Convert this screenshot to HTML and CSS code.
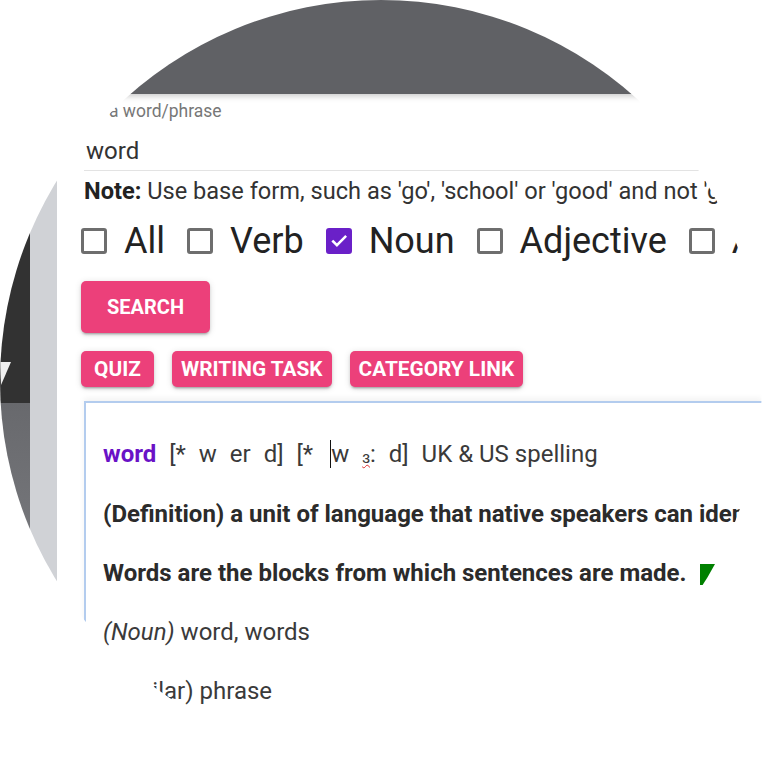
FILE: index.html
```html
<!DOCTYPE html>
<html lang="en">
<head>
<meta charset="utf-8">
<title>Dictionary search</title>
<link rel="stylesheet" href="styles.css">
</head>
<body>
<div class="lens">
  <header class="topbar"></header>
  <div class="layout">
    <aside class="rail">
      <div class="rail-top">
        <svg class="rail-arrow" width="12" height="26" viewBox="0 0 12 26"><polygon points="0,2 11,2 1,25" fill="#f0f0f0"/></svg>
      </div>
      <div class="rail-bottom"></div>
    </aside>
    <div class="gutter"></div>
    <main class="panel">
      <div class="field">
        <label class="field-label" for="q">Enter a word/phrase</label>
        <div class="field-input" id="q">word</div>
      </div>
      <p class="note"><b>Note:</b> Use base form, such as 'go', 'school' or 'good' and not 'going', 'schools' or 'better'.</p>
      <div class="options">
        <label class="opt"><span class="box"></span>All</label>
        <label class="opt"><span class="box"></span>Verb</label>
        <label class="opt"><span class="box checked"><svg width="22" height="22" viewBox="0 0 24 24"><path d="M5 12.5l4.5 4.5L19.5 7" fill="none" stroke="#fff" stroke-width="3" stroke-linecap="square"/></svg></span>Noun</label>
        <label class="opt"><span class="box"></span>Adjective</label>
        <label class="opt"><span class="box"></span>Adverb</label>
      </div>
      <button class="btn btn-lg">Search</button>
      <div class="actions">
        <button class="btn btn-sm btn-quiz">Quiz</button>
        <button class="btn btn-sm">Writing task</button>
        <button class="btn btn-sm">Category link</button>
      </div>
      <div class="entry">
        <p class="pron"><span class="headword">word</span><span class="ipa"> [* w er d] [* <span class="caret"></span>w <span class="spell">ɜ</span>: d] </span>UK &amp; US spelling</p>
        <p class="strong">(Definition) a unit of language that native speakers can identify as a single item of meaning.</p>
        <p class="strong">Words are the blocks from which sentences are made.<svg class="flag" width="16" height="21" viewBox="0 0 16 21"><polygon points="0,0 16,0 4,21 0,21" fill="#008000"/></svg></p>
        <p><i>(Noun)</i> word, words</p>
        <p>(Similar) phrase</p>
      </div>
    </main>
  </div>
</div>
</body>
</html>
```
FILE: styles.css
```css
* { box-sizing: border-box; }
html, body { margin: 0; padding: 0; background: #fff; }
body {
  width: 762px;
  height: 762px;
  overflow: hidden;
  font-family: Roboto, "Liberation Sans", sans-serif;
  color: #333;
}
.lens {
  width: 762px;
  height: 762px;
  border-radius: 50%;
  overflow: hidden;
  display: flex;
  flex-direction: column;
  background: #fff;
}
.topbar {
  height: 94px;
  flex: none;
  background: #606165;
  box-shadow: 0 2px 6px rgba(0, 0, 0, 0.22);
  position: relative;
  z-index: 2;
}
.layout {
  flex: 1;
  display: flex;
  min-height: 0;
}
.rail {
  width: 30px;
  flex: none;
  display: flex;
  flex-direction: column;
}
.rail-top {
  height: 309px;
  flex: none;
  background: #323232;
  padding-top: 266px;
}
.rail-arrow { display: block; }
.rail-bottom {
  flex: 1;
  background: linear-gradient(#68696d, #8b8c90);
}
.gutter {
  width: 27px;
  flex: none;
  background: #d0d2d6;
}
.panel {
  flex: 1;
  min-width: 0;
  background: #fff;
  padding: 0 0 0 24px;
  overflow: hidden;
}
.field {
  position: relative;
  width: 616px;
  margin-left: 3px;
  padding-top: 43px;
  border-bottom: 1px solid #e3e3e3;
}
.field-label {
  position: absolute;
  left: -20px;
  top: 7px;
  font-size: 17.5px;
  line-height: 20px;
  color: #777;
  white-space: nowrap;
}
.field-input {
  font-size: 24px;
  line-height: 28px;
  padding: 0 0 5px 2px;
  color: #333;
}
.note {
  margin: 6px 0 0;
  padding-left: 3px;
  font-size: 23.6px;
  line-height: 28px;
  white-space: nowrap;
  color: #333;
}
.note b { color: #222; }
.options {
  margin-top: 16px;
  height: 40px;
  display: flex;
  align-items: center;
  gap: 22px;
  white-space: nowrap;
}
.opt {
  display: flex;
  align-items: center;
  gap: 17px;
  font-size: 36px;
  line-height: 40px;
  color: #222;
  flex: none;
}
.opt .box { margin-top: -1px; }
.box {
  width: 26px;
  height: 26px;
  border: 3px solid #6e6e6e;
  border-radius: 3px;
  flex: none;
  display: flex;
  align-items: center;
  justify-content: center;
}
.box.checked {
  background: #6a20c8;
  border-color: #6a20c8;
}
.btn {
  display: flex;
  align-items: center;
  justify-content: center;
  border: 0;
  background: #ec407a;
  color: #fff;
  font-family: Roboto, "Liberation Sans", sans-serif;
  font-weight: 700;
  text-transform: uppercase;
  border-radius: 5px;
  box-shadow: 0 3px 2px -2px rgba(0,0,0,0.2), 0 2px 3px 0 rgba(0,0,0,0.14), 0 1px 7px 0 rgba(0,0,0,0.12);
  white-space: nowrap;
  cursor: pointer;
}
.btn-lg {
  margin-top: 20px;
  height: 52px;
  width: 129px;
  padding: 0;
  font-size: 20px;
}
.actions {
  margin-top: 18px;
  display: flex;
  gap: 18px;
}
.btn-sm {
  height: 36px;
  padding: 0 9px;
  font-size: 20.8px;
}
.btn-quiz { min-width: 73px; }
.entry {
  margin: 14px 0 0 3px;
  border: 2px solid #b3ccee;
  border-right: 0;
  border-bottom: 0;
  padding: 33px 0 0 17px;
  box-shadow: 0 -3px 6px rgba(0, 0, 0, 0.05);
  height: 400px;
}
.entry p {
  margin: 0 0 23px;
  font-size: 24px;
  line-height: 36px;
  white-space: nowrap;
  color: #3a3a3a;
}
.entry p.pron { margin-bottom: 21px; }
.entry p.strong {
  font-weight: 700;
  color: #2b2b2b;
}
.headword {
  font-weight: 700;
  color: #6a12c6;
}
.ipa {
  word-spacing: 7px;
  color: #3a3a3a;
}
.caret {
  display: inline-block;
  width: 1px;
  height: 28px;
  background: #111;
  vertical-align: -6px;
  margin-left: 4px;
}
.spell {
  font-size: 17px;
  vertical-align: -1px;
  text-decoration: underline wavy #e03030;
  text-decoration-thickness: 1px;
}
.flag {
  display: inline-block;
  margin-left: 14px;
  vertical-align: -4px;
}
```
